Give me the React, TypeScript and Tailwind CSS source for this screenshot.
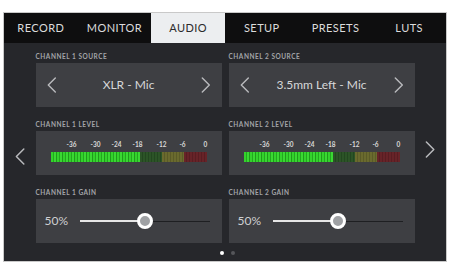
import React from 'react';

const tabs = ['RECORD', 'MONITOR', 'AUDIO', 'SETUP', 'PRESETS', 'LUTS'];
const scale = ['-36', '-30', '-24', '-18', '-12', '-6', '0'];
const scaleX = [21, 45, 66, 87, 111, 132, 155];

const Chevron: React.FC<{ dir: 'left' | 'right'; size?: number }> = ({ dir, size = 16 }) => (
  <svg width={size * 0.6} height={size} viewBox="0 0 9 16" fill="none">
    <path
      d={dir === 'left' ? 'M8 1L1 8l7 7' : 'M1 1l7 7-7 7'}
      stroke="#b9babd"
      strokeWidth="1.4"
      strokeLinecap="round"
      strokeLinejoin="round"
    />
  </svg>
);

const Label: React.FC<{ children: React.ReactNode }> = ({ children }) => (
  <div className="h-[10px] text-[6.5px] font-bold tracking-[0.08em] text-[#a3a4a8] leading-[8px]">
    {children}
  </div>
);

const Source: React.FC<{ n: number; value: string }> = ({ n, value }) => (
  <div>
    <Label>CHANNEL {n} SOURCE</Label>
    <div className="h-[44px] bg-[#3e3f43] flex items-center justify-between px-[11px]">
      <Chevron dir="left" />
      <span className="text-[12px] text-[#d6d7d9]">{value}</span>
      <Chevron dir="right" />
    </div>
  </div>
);

const Level: React.FC<{ n: number }> = ({ n }) => (
  <div>
    <Label>CHANNEL {n} LEVEL</Label>
    <div className="h-[44px] bg-[#3e3f43] pt-[10px] pl-[15px]">
      <div className="relative w-[156px] h-[11px]">
        {scale.map((s, i) => (
          <span
            key={s}
            className="absolute top-0 -translate-x-1/2 text-[6.5px] font-bold text-[#d8d8d8] leading-[8px]"
            style={{ left: scaleX[i] }}
          >
            {s}
          </span>
        ))}
      </div>
      <div className="flex w-[156px] h-[10px]">
        <div className="w-[89px] bg-[repeating-linear-gradient(90deg,#33d22c_0px,#33d22c_2px,#22a81e_2px,#22a81e_3px,#3ad833_3px,#3ad833_5px,#1f9a1b_5px,#1f9a1b_6px)]" />
        <div className="w-[22px] bg-[repeating-linear-gradient(90deg,#2c5427_0px,#2c5427_2px,#234620_2px,#234620_3px)]" />
        <div className="w-[22px] bg-[repeating-linear-gradient(90deg,#6a6a2e_0px,#6a6a2e_2px,#5a5a27_2px,#5a5a27_3px)]" />
        <div className="w-[23px] bg-[repeating-linear-gradient(90deg,#672328_0px,#672328_2px,#581d22_2px,#581d22_3px)]" />
      </div>
    </div>
  </div>
);

const Gain: React.FC<{ n: number }> = ({ n }) => (
  <div>
    <Label>CHANNEL {n} GAIN</Label>
    <div className="h-[44px] bg-[#3e3f43] flex items-center pl-[9px]">
      <span className="w-[35px] text-[12px] text-[#cfd0d2]">50%</span>
      <div className="relative w-[130px] h-[16px] flex items-center">
        <div className="w-[65px] h-[2px] bg-[#e6e6e6]" />
        <div className="flex-1 h-px bg-[#1e1f22]" />
        <div className="absolute left-[57px] top-0 w-[16px] h-[16px] rounded-full border-[3px] border-white bg-[#9fa1a4]" />
      </div>
    </div>
  </div>
);

export default function App() {
  return (
    <div className="w-[462px] h-[272px] bg-white pt-[12px] pl-[3px] font-['Lato','Open_Sans',sans-serif]">
      <div className="w-[444px] h-[250px] bg-[#26272b] border border-[#c9c9c9] flex flex-col">
        <div className="h-[30px] bg-[#0e0e0f] grid grid-cols-6">
          {tabs.map(t => (
            <div
              key={t}
              className={
                t === 'AUDIO'
                  ? 'flex items-center justify-center bg-[#eceef0] text-[#2a2a2a] text-[11px] tracking-[0.04em]'
                  : 'flex items-center justify-center text-[#dcdcdc] text-[11px] tracking-[0.04em]'
              }
            >
              {t}
            </div>
          ))}
        </div>
        <div className="flex pt-[10px]">
          <div className="w-[32px] flex items-center justify-center pt-[14px] pb-[10px]">
            <Chevron dir="left" size={17} />
          </div>
          <div className="flex flex-col">
            <div className="grid grid-cols-[186px_186px] gap-x-[7px] gap-y-[14px]">
              <Source n={1} value="XLR - Mic" />
              <Source n={2} value="3.5mm Left - Mic" />
              <Level n={1} />
              <Level n={2} />
              <Gain n={1} />
              <Gain n={2} />
            </div>
            <div className="flex justify-center gap-[7px] mt-[8px] pl-[4px]">
              <div className="w-[4px] h-[4px] rounded-full bg-white" />
              <div className="w-[4px] h-[4px] rounded-full bg-[#55565a]" />
            </div>
          </div>
          <div className="w-[32px] flex items-center justify-center pb-[10px]">
            <Chevron dir="right" size={17} />
          </div>
        </div>
      </div>
    </div>
  );
}
